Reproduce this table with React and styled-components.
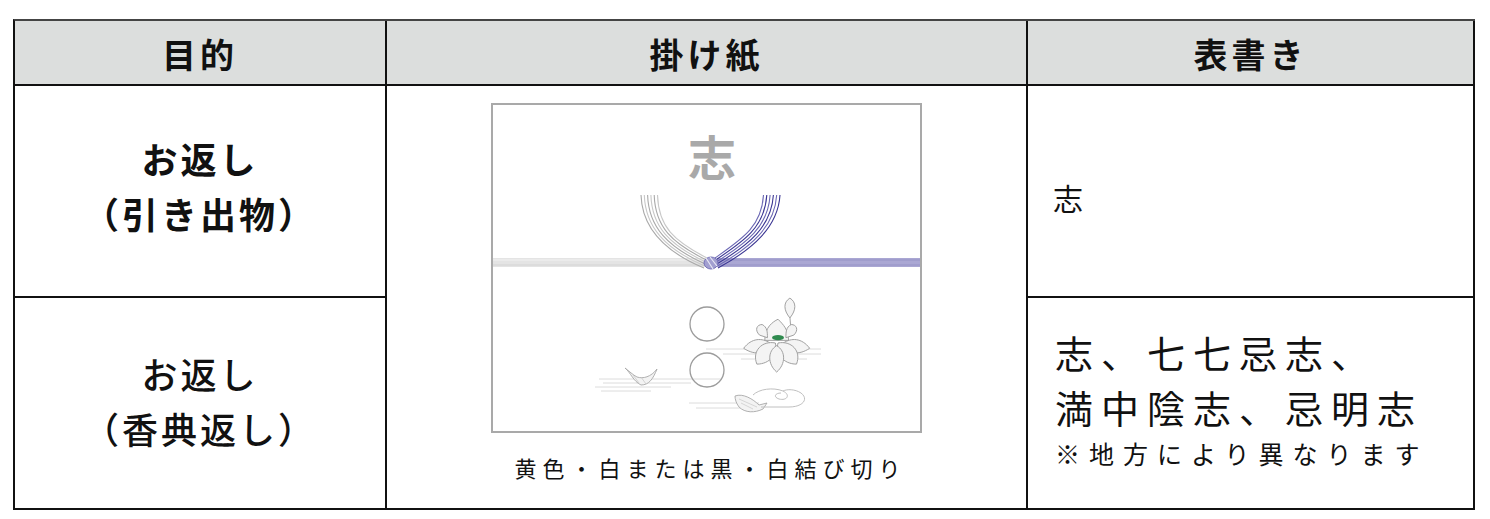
import styled, { createGlobalStyle } from "styled-components";

const GlobalStyle = createGlobalStyle`
  html, body {
    margin: 0;
    padding: 0;
    background: #ffffff;
  }
  body {
    font-family: "Noto Sans CJK JP", "Noto Sans", sans-serif;
    color: #111;
  }
`;

const Table = styled.div`
  display: grid;
  grid-template-columns: 372px 641px 447px;
  grid-template-rows: 65px 212px 212px;
  margin: 19px 0 0 13px;
  width: fit-content;
  border-top: 2px solid #444;
  border-left: 2px solid #111;
`;

const Cell = styled.div`
  box-sizing: border-box;
  border-right: 2px solid #111;
  border-bottom: 2px solid #111;
  display: flex;
  align-items: center;
  justify-content: ${(p) => (p.$left ? "flex-start" : "center")};
  background: ${(p) => (p.$head ? "#dcdedd" : "#fff")};
  ${(p) => p.$span && `grid-row: 2 / 4; grid-column: 2;`}
`;

const HeadText = styled.div`
  font-size: 34px;
  font-weight: 700;
  letter-spacing: 4px;
  padding-top: 2px;
`;

const PurposeText = styled.div`
  font-size: 36px;
  font-weight: ${(p) => (p.$bold ? 700 : 500)};
  line-height: 55px;
  text-align: center;
  letter-spacing: 3px;
  padding-bottom: ${(p) => (p.$bold ? "10px" : "4px")};
`;

const PaperColumn = styled.div`
  align-self: stretch;
  flex: 1;
  display: flex;
  flex-direction: column;
  align-items: center;
  padding-top: 17px;
  gap: 18px;
`;

const PaperFrame = styled.div`
  width: 431px;
  height: 330px;
  box-sizing: border-box;
  border: 2px solid #a9a9a9;
  background: #fff;
`;

const Caption = styled.div`
  font-size: 22px;
  letter-spacing: 6px;
  margin-left: 8px;
`;

const OmoteSingle = styled.div`
  font-size: 30px;
  padding: 12px 0 0 25px;
`;

const OmoteBlock = styled.div`
  padding: 0 0 10px 27px;
  display: flex;
  flex-direction: column;
`;

const OmoteLine = styled.div`
  font-size: ${(p) => (p.$small ? "25px" : "38px")};
  letter-spacing: ${(p) => (p.$small ? "9px" : "8px")};
  line-height: ${(p) => (p.$small ? "38px" : "55px")};
`;

function Noshi() {
  const strands = [0, 1, 2, 3, 4, 5];
  return (
    <svg width="427" height="326" viewBox="2 2 427 326">
      {/* band */}
      <rect x="2" y="155" width="213" height="9" fill="#e4e4e4" />
      <line x1="2" y1="157" x2="214" y2="157" stroke="#f2f2f2" strokeWidth="1" />
      <line x1="2" y1="162" x2="214" y2="162" stroke="#d4d4d4" strokeWidth="1" />
      <rect x="226" y="155" width="203" height="9" fill="#aaa7d3" />
      <line x1="226" y1="157" x2="429" y2="157" stroke="#9693c6" strokeWidth="1" />
      <line x1="226" y1="162" x2="429" y2="162" stroke="#9693c6" strokeWidth="1" />

      {/* strands */}
      {strands.map((i) => (
        <path
          key={"l" + i}
          d={`M${150 + i * 3.3},92 C${151 + i * 3.3},124 ${172 + i * 2.2},${148 - i * 2} ${213 + i * 0.6},${165 - i * 2}`}
          fill="none"
          stroke={i % 2 ? "#c8c8c8" : "#a9a9a9"}
          strokeWidth="1.1"
        />
      ))}
      {strands.map((i) => (
        <path
          key={"r" + i}
          d={`M${289 - i * 3.3},92 C${287 - i * 3.3},124 ${262 - i * 2.2},${146 - i * 2} ${227 - i * 0.6},${165 - i * 2}`}
          fill="none"
          stroke={i % 2 ? "#6b67b4" : "#3b3693"}
          strokeWidth="1.1"
        />
      ))}
      {/* knot */}
      <ellipse cx="220" cy="160" rx="7" ry="6" fill="#a29fd0" stroke="#7672b8" strokeWidth="1" />
      <path d="M215,155 L222,166 M219,154 L226,163" stroke="#e8e8f4" strokeWidth="1.2" />

      {/* title */}
      <text
        x="221"
        y="73"
        textAnchor="middle"
        fontSize="48"
        fontWeight="700"
        fill="#a9a9a9"
        fontFamily='"Noto Sans CJK JP", sans-serif'
      >
        志
      </text>

      {/* water lines */}
      <g stroke="#dcdcdc" strokeWidth="1" fill="none">
        <path d="M215,246 L330,246 M232,251 L330,251 M250,256 L316,256" />
        <path d="M108,276 L230,276 M112,280 L200,280 M104,284 L180,284 M110,288 L160,288" />
        <path d="M198,300 L268,300 M205,305 L256,305" />
      </g>

      {/* circles */}
      <circle cx="216" cy="221" r="17" fill="none" stroke="#9c9c9c" strokeWidth="1.3" />
      <circle cx="216" cy="267" r="17" fill="none" stroke="#9c9c9c" strokeWidth="1.3" />

      {/* lotus */}
      <g transform="translate(287 240) scale(1.32) translate(-292 -240)">
        <g stroke="#a0a0a0" strokeWidth="0.75" fill="#f4f4f4">
          <path d="M301,220 L302,233" fill="none" />
          <path d="M301,221 C296,215 296,209 301,206 C306,209 306,215 301,221 Z" />
          <path d="M266,244 C272,236 280,236 286,240 C283,248 275,250 266,244 Z" />
          <path d="M316,244 C310,236 302,236 296,240 C299,248 307,250 316,244 Z" />
          <path d="M276,256 C272,246 280,238 290,240 C292,248 286,256 276,256 Z" />
          <path d="M306,256 C310,246 302,238 292,240 C290,248 296,256 306,256 Z" />
          <path d="M282,238 C282,228 288,224 292,222 C296,226 300,230 300,238 Z" />
          <path d="M291,262 C284,256 284,246 291,242 C298,246 298,256 291,262 Z" />
          <path d="M278,234 C274,230 276,226 280,226 C284,228 284,232 284,236 Z" />
          <path d="M304,234 C308,230 306,226 302,226 C298,228 298,232 298,236 Z" />
        </g>
        <ellipse cx="292" cy="236" rx="4.5" ry="2" fill="#2f8a4e" />
      </g>

      {/* left leaf */}
      <path
        d="M134,265 C140,270 142,278 150,282 C158,282 162,276 166,266 C160,274 152,276 146,274 C142,272 138,268 134,265 Z"
        fill="#f3f3f3"
        stroke="#a8a8a8"
        strokeWidth="0.9"
      />
      <path d="M142,272 L148,280 M150,274 L155,281" stroke="#c4c4c4" strokeWidth="0.7" />

      {/* bottom leaf */}
      <path
        d="M244,293 C252,290 262,296 268,302 L276,300 L272,306 C264,310 254,310 248,304 C245,300 244,296 244,293 Z"
        fill="#f3f3f3"
        stroke="#a8a8a8"
        strokeWidth="0.9"
      />
      <path d="M248,296 L266,304 M250,300 L262,306" stroke="#c8c8c8" strokeWidth="0.7" />

      {/* swirl cloud */}
      <path
        d="M262,292 C268,286 282,284 292,288 C300,292 296,298 288,296 C282,294 284,290 290,290 M270,304 L298,304 C312,304 318,296 310,290 C304,286 296,286 292,288"
        fill="none"
        stroke="#c0c0c0"
        strokeWidth="1"
      />
    </svg>
  );
}

export default function App() {
  return (
    <>
      <GlobalStyle />
      <Table>
        <Cell $head>
          <HeadText>目的</HeadText>
        </Cell>
        <Cell $head>
          <HeadText>掛け紙</HeadText>
        </Cell>
        <Cell $head>
          <HeadText>表書き</HeadText>
        </Cell>

        <Cell>
          <PurposeText $bold>
            お返し
            <br />
            （引き出物）
          </PurposeText>
        </Cell>
        <Cell $span>
          <PaperColumn>
            <PaperFrame>
              <Noshi />
            </PaperFrame>
            <Caption>黄色・白または黒・白結び切り</Caption>
          </PaperColumn>
        </Cell>
        <Cell $left>
          <OmoteSingle>志</OmoteSingle>
        </Cell>

        <Cell>
          <PurposeText>
            お返し
            <br />
            （香典返し）
          </PurposeText>
        </Cell>
        <Cell $left>
          <OmoteBlock>
            <OmoteLine>志、七七忌志、</OmoteLine>
            <OmoteLine>満中陰志、忌明志</OmoteLine>
            <OmoteLine $small>※地方により異なります</OmoteLine>
          </OmoteBlock>
        </Cell>
      </Table>
    </>
  );
}
